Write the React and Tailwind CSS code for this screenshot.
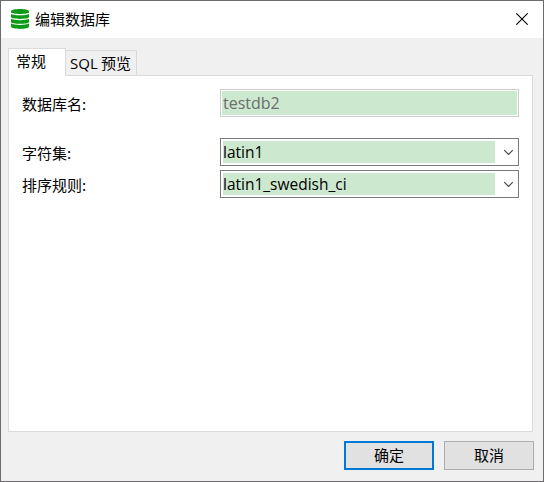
import React from "react";

const cjk = "font-['Noto_Sans_CJK_SC',sans-serif] text-[15px] leading-[20px] whitespace-nowrap";
const latin = "font-['Open_Sans','Noto_Sans',sans-serif] whitespace-nowrap";

function DatabaseIcon() {
  return (
    <svg className="-mt-px block" width="18" height="20" viewBox="0 0 18 20">
      <g fill="#0f9a16">
        <path d="M0 2.4C0-.8 18-.8 18 2.4V3.3C18 5.6 0 5.6 0 3.3Z" />
        <path d="M0 4.9C3 6.8 15 6.8 18 4.9V8.1C18 10.6 0 10.6 0 8.1Z" />
        <path d="M0 9.8C3 11.7 15 11.7 18 9.8V12.9C18 15.4 0 15.4 0 12.9Z" />
        <path d="M0 14.6C3 16.5 15 16.5 18 14.6V17.6C18 20.7 0 20.7 0 17.6Z" />
      </g>
    </svg>
  );
}

function Select({ value }) {
  return (
    <div className="flex h-7 w-[299px] border border-[#7a7a7a] bg-white p-[2px]">
      <div className={`${latin} h-[22px] w-[272px] bg-[#cce8cf] text-[15.5px] leading-[22px] text-black`}>
        {value}
      </div>
      <svg className="ml-[8px] mt-[8px] block" width="11" height="7" viewBox="0 0 11 7" fill="none" stroke="#444" strokeWidth="1.1">
        <path d="M1.2 1.2 5.5 5.5 9.8 1.2" />
      </svg>
    </div>
  );
}

function Label({ children }) {
  return <label className={`${cjk} w-[198px] pt-[5px]`}>{children}</label>;
}

export default function App() {
  return (
    <div className="flex h-[482px] w-[544px] flex-col border border-[#6d6b6d] bg-[#f0f0f0] text-black">
      <header className="flex h-[37px] items-center bg-white pl-[10px] pr-[15px]">
        <DatabaseIcon />
        <h1 className={`${cjk} ml-[6px] flex-1 pb-[2px]`}>编辑数据库</h1>
        <svg className="-mt-px block" width="12" height="12" viewBox="0 0 12 12" stroke="#000" strokeWidth="1.1">
          <path d="M.3.3 11.7 11.7M11.7.3.3 11.7" />
        </svg>
      </header>

      <div className="flex h-[37px] items-end pl-[7px]">
        <div className={`${cjk} z-10 -mb-px h-[28px] w-[58px] border border-b-0 border-[#dadada] bg-white pl-[7px] pt-[2px]`}>
          常规
        </div>
        <div className={`${cjk} h-[25px] w-[71px] border border-b-0 border-l-0 border-[#dadada] pl-[4px] pt-[2px]`}>
          <span className="font-['Open_Sans',sans-serif]">SQL</span> 预览
        </div>
      </div>

      <main className="ml-[7px] h-[357px] w-[525px] border border-[#dadada] bg-white pl-[13px] pt-[13px]">
        <div className="flex">
          <Label>数据库名:</Label>
          <div className="h-7 w-[299px] border border-[#cccccc] bg-white p-px">
            <div className={`${latin} h-6 bg-[#cce8cf] pl-px text-[16px] leading-[24px] text-[#6d6d6d]`}>testdb2</div>
          </div>
        </div>
        <div className="mt-[21px] flex">
          <Label>字符集:</Label>
          <Select value="latin1" />
        </div>
        <div className="mt-1 flex">
          <Label>排序规则:</Label>
          <Select value="latin1_swedish_ci" />
        </div>
      </main>

      <footer className="mt-[9px] flex justify-end gap-[10px] pr-[9px]">
        <button className={`${cjk} h-[29px] w-[90px] border-2 border-[#0078d7] bg-[#e1e1e1] pb-[2px]`}>确定</button>
        <button className={`${cjk} h-[29px] w-[90px] border border-[#adadad] bg-[#e1e1e1] pb-[2px]`}>取消</button>
      </footer>
    </div>
  );
}
